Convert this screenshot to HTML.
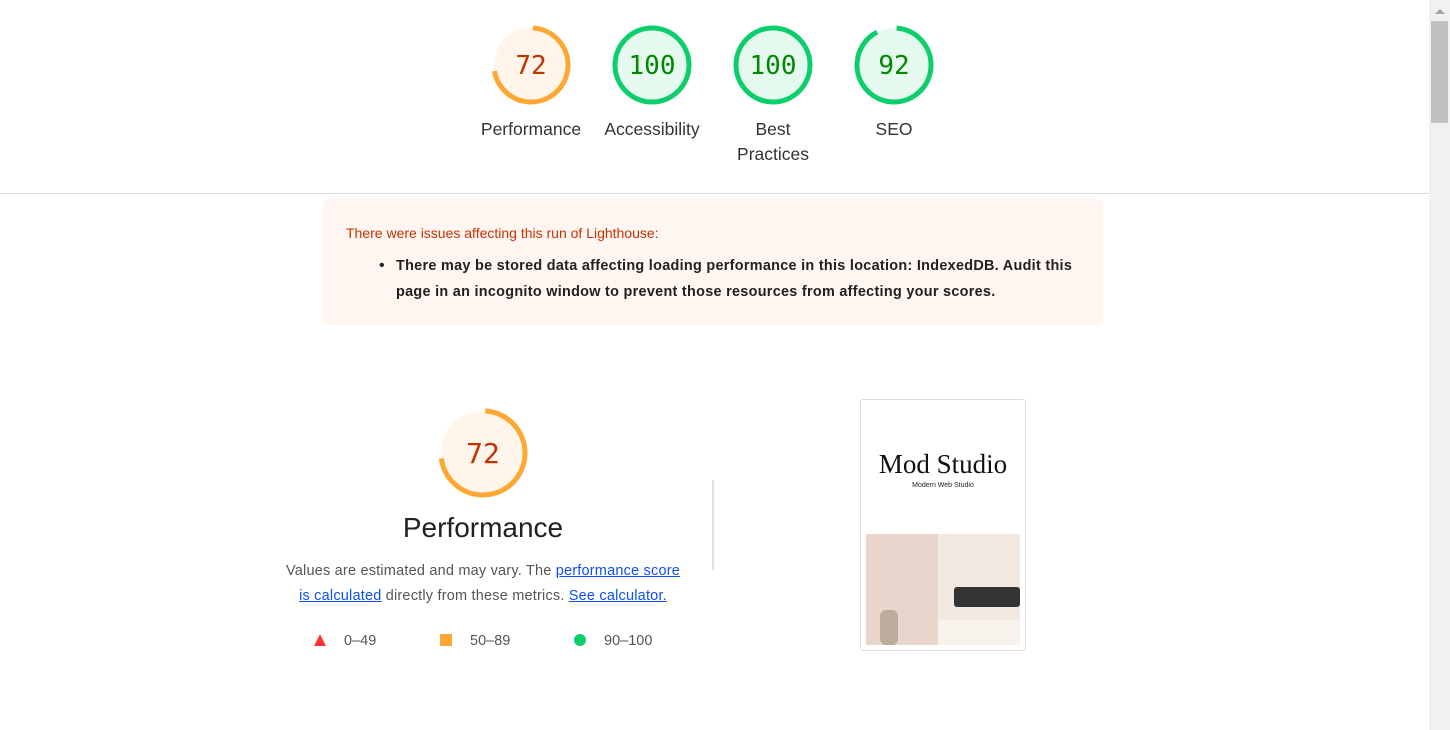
<!DOCTYPE html>
<html><head><meta charset="utf-8"><style>
*{margin:0;padding:0;box-sizing:border-box}
body{width:1450px;height:730px;overflow:hidden;background:#fff;font-family:"Liberation Sans",Arial,sans-serif;position:relative;color:#212121}
.a{position:absolute}
.lab{position:absolute;width:120px;text-align:center;font-size:17.5px;color:#333;line-height:25px}
a{color:#0c50f8;text-decoration:underline}
</style></head><body>
<svg class="a" style="left:0;top:0" width="1429" height="200">
<g font-family="DejaVu Sans Mono,Liberation Mono,monospace" font-size="26" text-anchor="middle">
<circle cx="531" cy="65" r="37" fill="#fff5ea"/>
<circle cx="531" cy="65" r="37" fill="none" stroke="#ffa733" stroke-width="5" stroke-dasharray="166 300" transform="rotate(-87 531 65)"/>
<text x="531" y="74" fill="#c33300">72</text>
<circle cx="652" cy="65" r="37" fill="#e5f9ee" stroke="#0cce6b" stroke-width="5"/>
<text x="652" y="74" fill="#008800">100</text>
<circle cx="773" cy="65" r="37" fill="#e5f9ee" stroke="#0cce6b" stroke-width="5"/>
<text x="773" y="74" fill="#008800">100</text>
<circle cx="894" cy="65" r="37" fill="#e5f9ee"/>
<circle cx="894" cy="65" r="37" fill="none" stroke="#0cce6b" stroke-width="5" stroke-dasharray="212 300" transform="rotate(-86 894 65)"/>
<text x="894" y="74" fill="#008800">92</text>
</g>
<line x1="0" y1="193.5" x2="1429" y2="193.5" stroke="#dcdcdc"/>
</svg>
<div class="lab" style="left:471px;top:117px">Performance</div>
<div class="lab" style="left:592px;top:117px">Accessibility</div>
<div class="lab" style="left:713px;top:117px">Best<br>Practices</div>
<div class="lab" style="left:834px;top:117px">SEO</div>

<div class="a" style="left:323px;top:199px;width:780px;height:126px;background:#fff6f1;border-radius:6px"></div>
<div class="a" style="left:346px;top:225px;font-size:14px;color:#c33300">There were issues affecting this run of Lighthouse:</div>
<div class="a" style="left:379px;top:253px;font-size:16px;line-height:25px;color:#212121">•</div>
<div class="a" style="left:396px;top:253px;font-size:14.4px;font-weight:bold;line-height:26px;width:690px;letter-spacing:0.3px;color:#212121">There may be stored data affecting loading performance in this location: IndexedDB. Audit this page in an incognito window to prevent those resources from affecting your scores.</div>

<svg class="a" style="left:430px;top:400px" width="110" height="110">
<circle cx="53" cy="53" r="42" fill="#fff5ea"/>
<circle cx="53" cy="53" r="42" fill="none" stroke="#ffa733" stroke-width="5" stroke-dasharray="190 300" transform="rotate(-87 53 53)"/>
<text x="53" y="63" text-anchor="middle" font-family="DejaVu Sans Mono,Liberation Mono,monospace" font-size="28" fill="#c33300">72</text>
</svg>
<div class="a" style="left:333px;top:512px;width:300px;text-align:center;font-size:28px;color:#212121">Performance</div>
<div class="a" style="left:273px;top:559px;width:420px;text-align:center;font-size:14.5px;line-height:25px;letter-spacing:0.2px;color:#555">Values are estimated and may vary. The <a>performance score</a><br><a>is calculated</a> directly from these metrics. <a>See calculator.</a></div>
<svg class="a" style="left:313px;top:633px" width="14" height="14"><polygon points="7,1 13,13 1,13" fill="#ff3333"/></svg>
<div class="a" style="left:344px;top:633px;font-size:14.5px;color:#555">0–49</div>
<div class="a" style="left:440px;top:634px;width:12px;height:12px;background:#ffa733"></div>
<div class="a" style="left:470px;top:633px;font-size:14.5px;color:#555">50–89</div>
<div class="a" style="left:574px;top:634px;width:12px;height:12px;border-radius:50%;background:#0cce6b"></div>
<div class="a" style="left:604px;top:633px;font-size:14.5px;color:#555">90–100</div>
<div class="a" style="left:712px;top:480px;width:2px;height:90px;background:#e0e0e0"></div>

<div class="a" style="left:860px;top:399px;width:166px;height:252px;border:1px solid #ddd;border-radius:3px;background:#fff"></div>
<div class="a" style="left:861px;top:449px;width:164px;text-align:center;font-family:'Liberation Serif',serif;font-size:27px;color:#111">Mod Studio</div>
<div class="a" style="left:861px;top:482px;width:164px;text-align:center;font-size:7px;color:#222">Modern Web Studio</div>
<div class="a" style="left:866px;top:534px;width:72px;height:111px;background:#e8d6cc"></div>
<div class="a" style="left:938px;top:534px;width:82px;height:111px;background:#f1e9e2"></div>
<div class="a" style="left:938px;top:620px;width:82px;height:25px;background:#f7f2ec"></div>
<div class="a" style="left:954px;top:587px;width:66px;height:20px;background:#333;border-radius:3px"></div>
<div class="a" style="left:880px;top:610px;width:18px;height:35px;background:#a89a88;border-radius:6px;opacity:.7"></div>

<div class="a" style="left:1429px;top:0;width:21px;height:730px;background:#f1f1f1"></div>
<div class="a" style="left:1431px;top:21px;width:17px;height:102px;background:#c1c1c1"></div>
<svg class="a" style="left:1434px;top:8px" width="12" height="8"><polygon points="6,1 11,6 1,6" fill="#a3a3a3"/></svg>
</body></html>
